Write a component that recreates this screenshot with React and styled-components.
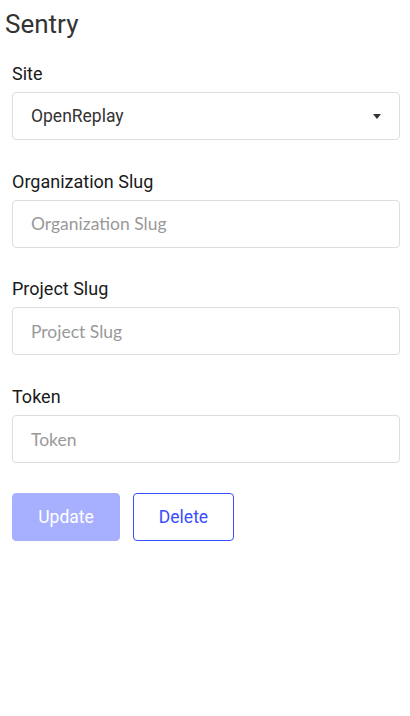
import styled, { createGlobalStyle } from "styled-components"

const Global = createGlobalStyle`
    body {
        margin: 0;
        background: #fff;
        font-family: Roboto, "Liberation Sans", sans-serif;
        color: #222;
    }
`

const Page = styled.div`
    width: 410px;
    padding: 9px 10px 0 12px;
    box-sizing: border-box;
`

const Title = styled.h1`
    margin: 0 0 23px -7px;
    font-size: 26px;
    font-weight: 400;
    line-height: 31px;
    color: #333;
`

const Form = styled.form`
    display: flex;
    flex-direction: column;
    gap: 30.7px;
`

const Field = styled.div`
    display: flex;
    flex-direction: column;
    gap: 7px;
`

const Label = styled.label`
    font-size: 18px;
    font-weight: 400;
    line-height: 22px;
    color: #1a1a1a;
`

const Input = styled.input`
    height: 48px;
    box-sizing: border-box;
    border: 1px solid #ddd;
    border-radius: 4px;
    padding: 0 18px;
    font-family: Lato, Roboto, sans-serif;
    font-size: 17.5px;
    color: #333;
    outline: none;
    &::placeholder {
        color: #999;
    }
`

const Select = styled.div`
    height: 48px;
    box-sizing: border-box;
    border: 1px solid #ddd;
    border-radius: 4px;
    padding: 0 18px;
    display: flex;
    align-items: center;
    justify-content: space-between;
    font-size: 17.5px;
    color: #333;
`

const Caret = styled.span`
    width: 0;
    height: 0;
    border-left: 4.5px solid transparent;
    border-right: 4.5px solid transparent;
    border-top: 5px solid #333;
`

const Buttons = styled.div`
    display: flex;
    gap: 13px;
    margin-top: -0.8px;
`

const Button = styled.button`
    height: 48px;
    width: ${p => p.$w}px;
    box-sizing: border-box;
    border-radius: 4px;
    font-family: Roboto, sans-serif;
    font-size: 17.5px;
    font-weight: 400;
    cursor: pointer;
    background: ${p => p.$primary ? "#a7b0ff" : "#fff"};
    color: ${p => p.$primary ? "#fff" : "#394eff"};
    border: 1px solid ${p => p.$primary ? "#a7b0ff" : "#394eff"};
`

const fields = ["Organization Slug", "Project Slug", "Token"]

function App() {
    return (
        <Page>
            <Global />
            <Title>Sentry</Title>
            <Form onSubmit={e => e.preventDefault()}>
                <Field>
                    <Label>Site</Label>
                    <Select>
                        OpenReplay
                        <Caret />
                    </Select>
                </Field>
                {fields.map(f => (
                    <Field key={f}>
                        <Label>{f}</Label>
                        <Input placeholder={f} />
                    </Field>
                ))}
                <Buttons>
                    <Button $primary $w={108} disabled>Update</Button>
                    <Button $w={101} type="button">Delete</Button>
                </Buttons>
            </Form>
        </Page>
    )
}

export default App
